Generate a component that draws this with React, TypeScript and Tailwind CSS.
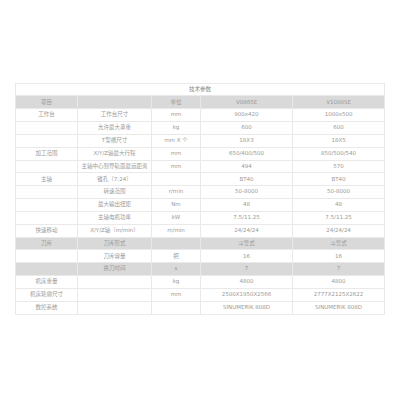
type Row = {
  group?: string;
  item?: string;
  unit?: string;
  a: string;
  b: string;
  gray?: boolean;
};

const rows: Row[] = [
  { group: '工作台', item: '工作台尺寸', unit: 'mm', a: '900x420', b: '1000x500' },
  { item: '允许最大承重', unit: 'kg', a: '600', b: '600' },
  { item: 'T型槽尺寸', unit: 'mm X 个', a: '18X3', b: '18X5' },
  { group: '加工范围', item: 'X/Y/Z轴最大行程', unit: 'mm', a: '650/400/500', b: '850/500/540' },
  { item: '主轴中心到导轨面最远距离', unit: 'mm', a: '494', b: '570' },
  { group: '主轴', item: '锥孔（7:24）', a: 'BT40', b: 'BT40' },
  { item: '转速范围', unit: 'r/min', a: '50-8000', b: '50-8000' },
  { item: '最大输出扭矩', unit: 'Nm', a: '48', b: '48' },
  { item: '主轴电机功率', unit: 'kW', a: '7.5/11.25', b: '7.5/11.25' },
  { group: '快速移动', item: 'X/Y/Z轴（m/min）', unit: 'm/min', a: '24/24/24', b: '24/24/24' },
  { group: '刀库', item: '刀库形式', a: '斗笠式', b: '斗笠式', gray: true },
  { item: '刀库容量', unit: '把', a: '16', b: '16' },
  { item: '换刀时间', unit: 's', a: '7', b: '7', gray: true },
  { group: '机床重量', unit: 'kg', a: '4800', b: '4800' },
  { group: '机床轮廓尺寸', unit: 'mm', a: '2500X1950X2566', b: '2777X2125X2622' },
  { group: '数控系统', a: 'SINUMERIK 808D', b: 'SINUMERIK 808D' },
];

const cell = 'border border-[#e9e9e9] p-0 text-center align-middle leading-none whitespace-nowrap';
const grayCell = cell + ' border-[#d9d9d9]';

export default function App() {
  return (
    <div
      className="w-[400px] h-[400px] bg-white pt-[83px] pl-[15px] text-[#9a9a9a] text-[5.5px]"
      style={{ fontFamily: '"DejaVu Sans", "Noto Sans CJK SC", sans-serif' }}
    >
      <table className="w-[369px] table-fixed border-collapse">
        <colgroup>
          <col className="w-[62px]" />
          <col className="w-[74px]" />
          <col className="w-[49px]" />
          <col className="w-[92px]" />
          <col className="w-[92px]" />
        </colgroup>
        <tbody>
          <tr className="h-[12.4px]">
            <td colSpan={5} className={cell + ' text-[#888]'}>
              技术参数
            </td>
          </tr>
          <tr className="h-[12.8px] bg-[#d9d9d9]">
            <td className={grayCell}>项目</td>
            <td className={grayCell}></td>
            <td className={grayCell}>单位</td>
            <td className={grayCell}>V0865E</td>
            <td className={grayCell}>V1000SE</td>
          </tr>
          {rows.map((r, i) => (
            <tr key={i} className={'h-[12.85px] ' + (r.gray ? 'bg-[#d9d9d9]' : '')}>
              <td className={r.gray ? grayCell : cell}>{r.group ?? ''}</td>
              <td className={r.gray ? grayCell : cell}>{r.item ?? ''}</td>
              <td className={r.gray ? grayCell : cell}>{r.unit ?? ''}</td>
              <td className={r.gray ? grayCell : cell}>{r.a}</td>
              <td className={r.gray ? grayCell : cell}>{r.b}</td>
            </tr>
          ))}
        </tbody>
      </table>
    </div>
  );
}
